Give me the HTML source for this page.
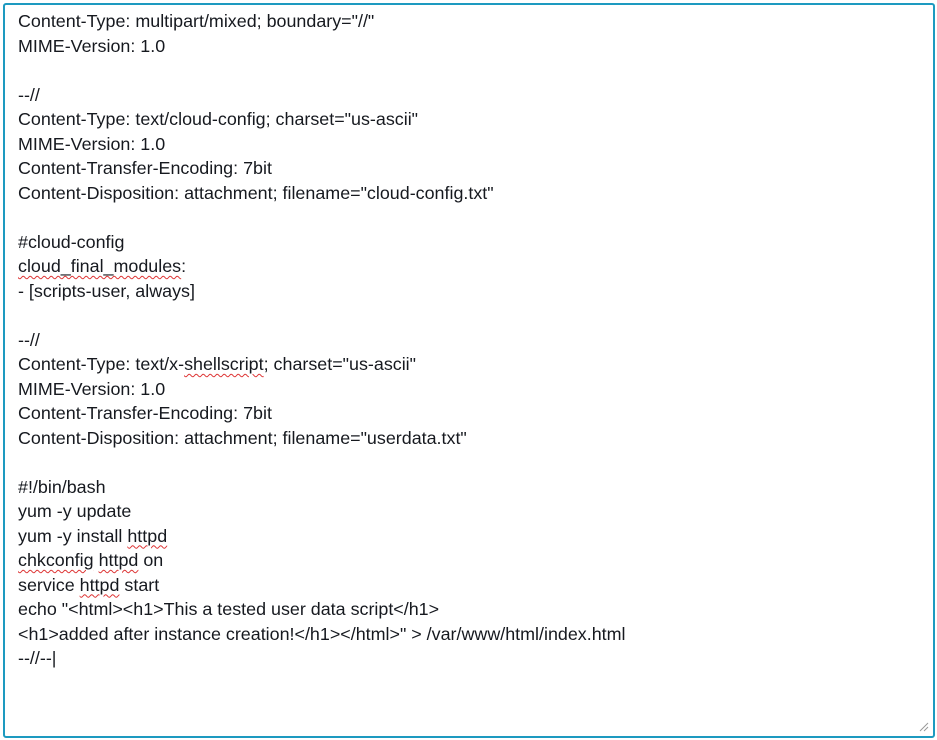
<!DOCTYPE html>
<html><head><meta charset="utf-8"><style>
html,body{margin:0;padding:0;background:#fff;width:937px;height:740px;overflow:hidden}
.box{position:absolute;left:3px;top:3px;width:928px;height:731px;border:2px solid #1d9ac0;border-radius:3px;box-sizing:content-box}
.t{position:absolute;left:13px;top:4px;font-family:"Liberation Sans",sans-serif;font-size:17.9px;line-height:24.5px;color:#16191f;white-space:pre}
.u{text-decoration:underline wavy #d33;text-decoration-thickness:1px;text-underline-offset:3px}
.grip{position:absolute;right:4px;bottom:4px;width:10px;height:10px}
</style></head><body>
<div class="box"><div class="t">Content-Type: multipart/mixed; boundary="//"
MIME-Version: 1.0

--//
Content-Type: text/cloud-config; charset="us-ascii"
MIME-Version: 1.0
Content-Transfer-Encoding: 7bit
Content-Disposition: attachment; filename="cloud-config.txt"

#cloud-config
<span class="u">cloud_final_modules</span>:
- [scripts-user, always]

--//
Content-Type: text/x-<span class="u">shellscript</span>; charset="us-ascii"
MIME-Version: 1.0
Content-Transfer-Encoding: 7bit
Content-Disposition: attachment; filename="userdata.txt"

#!/bin/bash
yum -y update
yum -y install <span class="u">httpd</span>
<span class="u">chkconfig</span> <span class="u">httpd</span> on
service <span class="u">httpd</span> start
echo "&lt;html&gt;&lt;h1&gt;This a tested user data script&lt;/h1&gt;
&lt;h1&gt;added after instance creation!&lt;/h1&gt;&lt;/html&gt;" &gt; /var/www/html/index.html
--//--|</div>
<svg class="grip" viewBox="0 0 10 10"><path d="M9 1L1 9M9 5L5 9" stroke="#999" stroke-width="1"/></svg>
</div>
</body></html>
